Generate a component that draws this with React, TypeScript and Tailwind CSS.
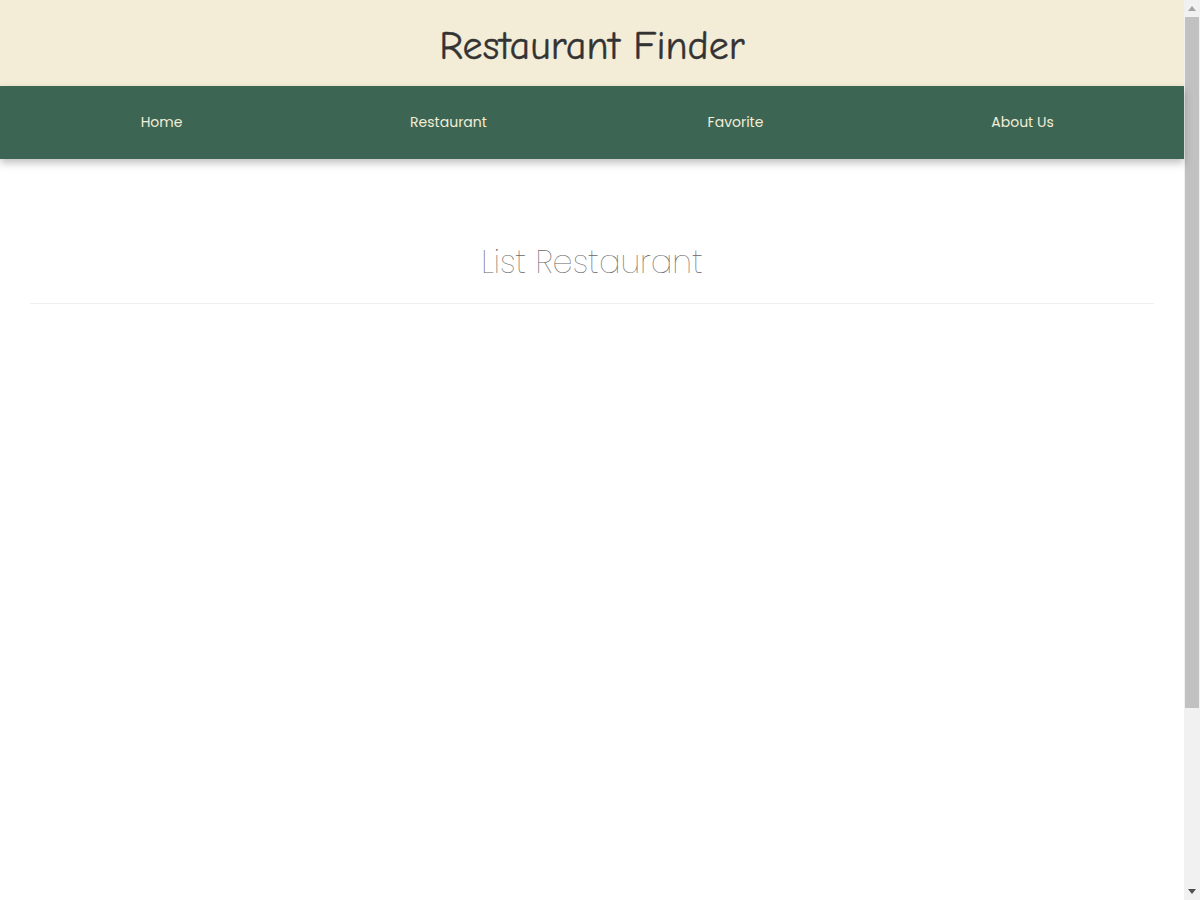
import React from 'react';

const NAV_ITEMS = ['Home', 'Restaurant', 'Favorite', 'About Us'];

// mimics the browser's vertical scrollbar seen in the screenshot
const FakeScrollbar = () => (
  <div className="flex h-[900px] w-[16px] shrink-0 flex-col items-center bg-[#f1f1f1]">
    <div className="flex h-[17px] items-center justify-center">
      <svg width="8" height="5" viewBox="0 0 8 5">
        <path d="M4 0 8 5H0z" fill="#a3a3a3" />
      </svg>
    </div>
    <div className="h-[691px] w-[14px] bg-[#c1c1c1]" />
    <div className="flex-1" />
    <div className="flex h-[17px] items-center justify-center">
      <svg width="8" height="5" viewBox="0 0 8 5">
        <path d="M0 0h8L4 5z" fill="#505050" />
      </svg>
    </div>
  </div>
);

export default function App() {
  return (
    <div className="flex h-[900px] overflow-hidden bg-white">
      <div className="min-w-0 flex-1">
        <header className="flex h-[86px] items-center justify-center bg-[#f3ecd7] pt-[5px]">
          <h1
            className="text-[40px] leading-none text-[#333333] [-webkit-text-stroke:0.4px_#333333]"
            style={{ fontFamily: '"Comic Sans MS", "Comic Neue", cursive' }}
          >
            Restaurant Finder
          </h1>
        </header>

        <nav className="relative z-10 bg-[#3c6653] shadow-[0_4px_8px_rgba(0,0,0,0.25)]">
          <ul className="grid h-[73px] grid-cols-4 px-[18px] font-['Poppins','Inter',sans-serif] text-[14px] text-[#f3ecd7]">
            {NAV_ITEMS.map((item) => (
              <li key={item} className="flex items-center justify-center">
                <a href="#" className="px-4 py-3">
                  {item}
                </a>
              </li>
            ))}
          </ul>
        </nav>

        <main className="px-[30px] pt-[79px]">
          <h2 className="text-center font-['Poppins','Inter',sans-serif] text-[32px] font-thin text-[#666666]">
            List Restaurant
          </h2>
          <hr className="mt-[17px] border-[#eeeeee]" />
        </main>
      </div>
      <FakeScrollbar />
    </div>
  );
}
